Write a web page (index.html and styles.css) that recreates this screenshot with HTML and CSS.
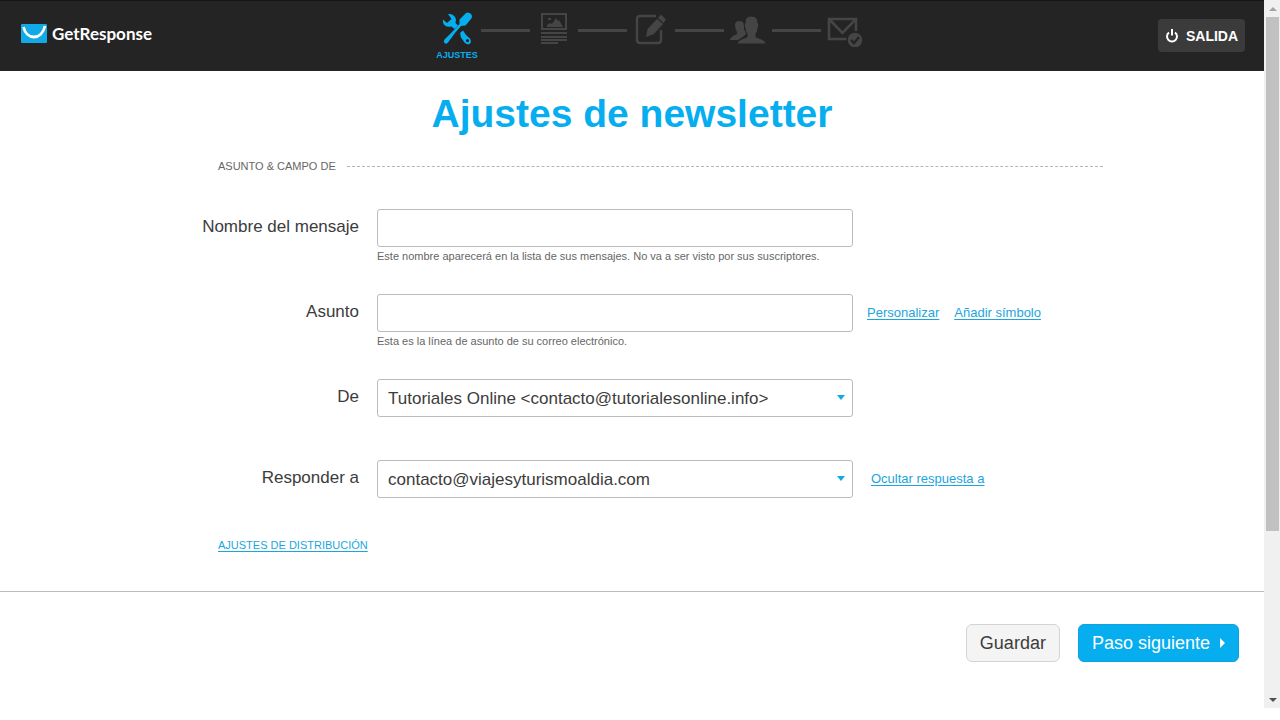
FILE: index.html
```html
<!DOCTYPE html>
<html lang="es">
<head>
<meta charset="utf-8">
<meta name="viewport" content="width=device-width, initial-scale=1">
<title>Ajustes de newsletter</title>
<link rel="stylesheet" href="styles.css">
</head>
<body>
<div class="window">
  <div class="page">
    <header class="topbar">
      <a class="logo" href="#">
        <svg class="logo-mark" viewBox="0 0 26 19" aria-hidden="true">
          <rect width="26" height="19" rx="1" fill="#12a9e6"/>
          <path d="M2.500 3C5.500 16.500 20.500 16.500 24 2" fill="none" stroke="#fff" stroke-width="2.800"/>
        </svg>
        <span>GetResponse</span>
      </a>
      <nav class="steps" aria-label="Pasos">
        <a class="step step-active" href="#">
          <svg viewBox="0 0 36 36" aria-hidden="true">
            <path d="M14 20L20.500 13 20.500 8.500 27 2Q29.500 .500 32 3 34 5.500 32 8L26.500 14.500 22 15 16 22 9 31.500Q7.500 33.500 5.500 32 4 30.500 5.500 28.500z"/>
            <path fill-rule="evenodd" d="M9 3Q15.500 2.500 17 8.500L16.500 12 19 14.500 15.500 18 12.500 15.500Q6 17 4 11.500L4 8.500 8 12 12.500 8zM21 22L24 19.500 27 24 31 27.500Q33 31 30.500 33 27.500 34 25.500 31.500L22 26.500zM28.500 28A1.600 1.600 0 1 0 28.510 31.200A1.600 1.600 0 1 0 28.500 28z"/>
          </svg>
          <span>AJUSTES</span>
        </a>
        <span class="line"></span>
        <a class="step" href="#" aria-label="Plantilla">
          <svg viewBox="0 0 36 36" aria-hidden="true">
            <path fill-rule="evenodd" d="M5 2h26v17H5zM7 4v13h22V4z"/>
            <path d="M11 16v-2l3-2 2 1 4-6 2 3 1-1 4 7zM12 7h3v2h-3zM5 21h26v2H5zM5 25h26v2H5zM5 28h26v2H5zM5 31h17v2H5z"/>
          </svg>
        </a>
        <span class="line"></span>
        <a class="step" href="#" aria-label="Editar">
          <svg viewBox="0 0 36 36" aria-hidden="true">
            <path d="M23 5H7Q4 5 4 8v21q0 3 3 3h18q3 0 3-3V19" fill="none" stroke="currentColor" stroke-width="2.400"/>
            <path d="M13 26l1.500-8L24 8l6 5-9 10zM25 7l3-3.500 5 5L30.500 12z"/>
          </svg>
        </a>
        <span class="line"></span>
        <a class="step" href="#" aria-label="Destinatarios">
          <svg viewBox="0 0 36 36" aria-hidden="true">
            <path d="M0 29q0-3 7-6v-2q-2-3-2-7 0-4 4.500-4 3 0 4.500 3v5l2 4q0 2-2 3l-6 4z"/>
            <path d="M7 33q0-4 10-7v-3q-2-3-2-6l-1-3 1-2q0-7 6-7 7 0 7 7l1 2-1 3q0 3-2 6v3q10 3 10 7z" stroke="#242424" stroke-width="1"/>
          </svg>
        </a>
        <span class="line"></span>
        <a class="step" href="#" aria-label="Enviar">
          <svg viewBox="0 0 36 36" aria-hidden="true">
            <path d="M20 28H2V8h27v12M2 8l13.500 14L29 8" fill="none" stroke="currentColor" stroke-width="2.600"/>
            <circle cx="28" cy="29" r="8" stroke="#242424" stroke-width="1.500"/>
            <path d="M24 29l3 3 5-6" fill="none" stroke="#242424" stroke-width="2.200"/>
          </svg>
        </a>
      </nav>
      <button class="exit" type="button">
        <svg viewBox="0 0 14 16" aria-hidden="true"><path d="M4 4.500a5 5 0 1 0 6 0M7 1v6.500" fill="none" stroke="#fff" stroke-width="2"/></svg>
        SALIDA
      </button>
    </header>

    <main>
      <h1>Ajustes de newsletter</h1>
      <form class="settings" id="settings">
        <h2><span>ASUNTO &amp; CAMPO DE</span></h2>
        <div class="row row-tall">
          <label for="nombre">Nombre del mensaje</label>
          <div class="field">
            <input class="control" id="nombre" type="text" aria-describedby="nombre-nota">
            <p id="nombre-nota">Este nombre aparecerá en la lista de sus mensajes. No va a ser visto por sus suscriptores.</p>
          </div>
        </div>
        <div class="row row-tall">
          <label for="asunto">Asunto</label>
          <div class="field">
            <input class="control" id="asunto" type="text" aria-describedby="asunto-nota">
            <p id="asunto-nota">Esta es la línea de asunto de su correo electrónico.</p>
          </div>
          <div class="links"><a href="#">Personalizar</a><a href="#">Añadir símbolo</a></div>
        </div>
        <div class="row">
          <label for="de">De</label>
          <div class="field drop">
            <select class="control" id="de"><option>Tutoriales Online &lt;contacto@tutorialesonline.info&gt;</option></select>
          </div>
        </div>
        <div class="row">
          <label for="responder">Responder a</label>
          <div class="field drop">
            <select class="control" id="responder"><option>contacto@viajesyturismoaldia.com</option></select>
          </div>
          <div class="links links-reply"><a href="#">Ocultar respuesta a</a></div>
        </div>
        <a class="more" href="#">AJUSTES DE DISTRIBUCIÓN</a>
      </form>
    </main>

    <footer class="actions">
      <button class="button" type="submit" form="settings">Guardar</button>
      <button class="button button-next" type="button">Paso siguiente
        <svg viewBox="0 0 5 10" aria-hidden="true"><path d="M0 0l5 5-5 5z" fill="#fff"/></svg>
      </button>
    </footer>
  </div>
  <div class="scrollbar" aria-hidden="true">
    <svg viewBox="0 0 8 4"><path d="M0 4l4-4 4 4z" fill="#a3a3a3"/></svg>
    <div class="thumb"></div>
    <svg viewBox="0 0 8 4"><path d="M0 0l4 4 4-4z" fill="#505050"/></svg>
  </div>
</div>
</body>
</html>
```
FILE: styles.css
```css
* { box-sizing: border-box; }

body {
  margin: 0;
  background: #fff;
  color: #3c3c3c;
  font-family: "Liberation Sans", Arial, sans-serif;
  font-size: 17px;
}

a { color: #1ba5de; text-underline-offset: 2px; }
button, input, select { font-family: inherit; }

.window { display: flex; }
.page { flex: 1; min-width: 0; }

/* Top bar */
.topbar {
  display: grid;
  grid-template-columns: 1fr auto 1fr;
  height: 71px;
  padding: 0 19px 0 21px;
  border-top: 1px solid #171717;
  background: #242424;
}

.logo {
  display: flex;
  align-items: center;
  align-self: start;
  gap: 5px;
  height: 64px;
  color: #fff;
  font: bold 17px Lato, sans-serif;
  text-decoration: none;
}
.logo-mark { width: 26px; height: 19px; }

.steps { display: flex; padding: 10px 0 0 36px; }
.step {
  display: flex;
  flex-direction: column;
  align-items: center;
  width: 48px;
  color: #454545;
  text-decoration: none;
}
.step svg { width: 36px; height: 36px; fill: currentColor; }
.step-active { color: #06aeef; font-size: 9px; font-weight: bold; line-height: 16px; }
.line { width: 49px; height: 3px; margin-top: 18px; background: #454545; }

.exit {
  display: flex;
  align-items: center;
  justify-content: center;
  justify-self: end;
  gap: 7px;
  width: 87px;
  height: 33px;
  margin-top: 18px;
  padding: 0;
  border: 0;
  border-radius: 4px;
  background: #3b3b3b;
  color: #fff;
  font-size: 14px;
  font-weight: bold;
}
.exit svg { width: 14px; height: 16px; }

/* Form */
h1 {
  margin: 0;
  padding-top: 18px;
  color: #06aeef;
  font-size: 39px;
  line-height: 50px;
  text-align: center;
}

.settings { max-width: 942px; margin: 0 auto; }

h2 {
  display: flex;
  align-items: center;
  gap: 11px;
  margin: 0 0 35px;
  padding: 19px 0 0 57px;
  color: #666;
  font-size: 11px;
  font-weight: normal;
  line-height: 16px;
}
h2::after { content: ""; flex: 1; border-top: 1px dashed #b5b5b5; }

.row {
  display: grid;
  grid-template-columns: 216px 476px 1fr;
  align-items: start;
  margin-bottom: 34px;
}
.row + .row:not(.row-tall) { min-height: 38px; }
.row:not(.row-tall) { margin-bottom: 43px; }
.row-tall { min-height: 85px; margin-bottom: 0; }
.row label { padding-right: 18px; line-height: 36px; text-align: right; }

.control {
  display: block;
  width: 100%;
  height: 38px;
  padding: 0 10px;
  border: 1px solid #bcbcbc;
  border-radius: 3px;
  background: #fff;
  color: #3c3c3c;
  font-size: 17px;
}
select.control { appearance: none; }
.field p { margin: 1px 0 0; color: #666; font-size: 11px; line-height: 16px; }

.drop { position: relative; }
.drop::after {
  content: "";
  position: absolute;
  top: 16px;
  right: 8px;
  border: 4px solid transparent;
  border-top: 5px solid #12a9e6;
  border-bottom: 0;
  pointer-events: none;
}

.links { display: flex; gap: 15px; padding-left: 14px; font-size: 13px; line-height: 38px; }
.links-reply { padding-left: 18px; }

.more { display: block; width: fit-content; margin: -4px 0 0 57px; font-size: 11px; line-height: 16px; }

/* Actions */
.actions {
  display: flex;
  justify-content: flex-end;
  gap: 18px;
  margin-top: 38px;
  padding: 32px 25px 46px;
  border-top: 1px solid #bcbcbc;
}
.button {
  height: 38px;
  padding: 0 13px;
  border: 1px solid #d4d4d4;
  border-radius: 6px;
  background: #f4f4f4;
  color: #3c3c3c;
  font-size: 18px;
}
.button-next {
  display: flex;
  align-items: center;
  gap: 10px;
  border-color: #0ca3de;
  background: #06aeef;
  color: #fff;
}
.button-next svg { width: 5px; height: 10px; }

/* Scrollbar */
.scrollbar {
  display: flex;
  flex-direction: column;
  align-items: center;
  width: 16px;
  padding: 7px 1px 6px 2px;
  background: #f0f0f0;
}
.scrollbar svg { width: 8px; height: 4px; }
.thumb { width: 100%; height: 74%; margin: 6px 0 auto; background: #c1c1c1; }
```
